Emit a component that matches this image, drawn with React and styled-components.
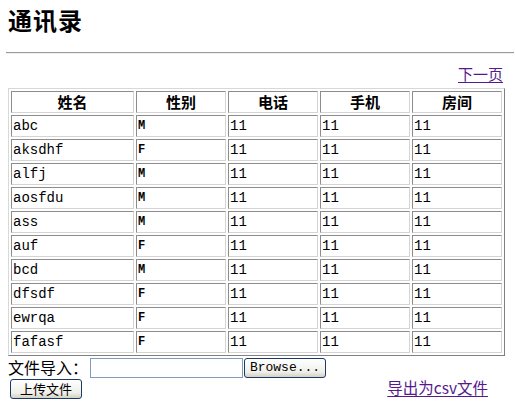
import React from 'react'
import styled, { createGlobalStyle } from 'styled-components'

const rows = [
  ['abc', 'M'],
  ['aksdhf', 'F'],
  ['alfj', 'M'],
  ['aosfdu', 'M'],
  ['ass', 'M'],
  ['auf', 'F'],
  ['bcd', 'M'],
  ['dfsdf', 'F'],
  ['ewrqa', 'F'],
  ['fafasf', 'F'],
]

const heads = ['姓名', '性别', '电话', '手机', '房间']

const App = () => {
  return (
    <Page>
      <Global />
      <Title>通讯录</Title>
      <Rule />
      <Pager>
        <NavLink href="#">下一页</NavLink>
      </Pager>
      <Table>
        <thead>
          <tr>
            {heads.map((h, i) => (
              <Head key={h} $first={i === 0}>{h}</Head>
            ))}
          </tr>
        </thead>
        <tbody>
          {rows.map(([name, sex]) => (
            <tr key={name}>
              <Cell>{name}</Cell>
              <Cell $sex>{sex}</Cell>
              <Cell>11</Cell>
              <Cell>11</Cell>
              <Cell>11</Cell>
            </tr>
          ))}
        </tbody>
      </Table>
      <ImportRow>
        <Label>文件导入：</Label>
        <FileField readOnly value="" />
        <Button $wide>Browse...</Button>
      </ImportRow>
      <ActionRow>
        <Button>上传文件</Button>
        <ExportLink href="#">导出为csv文件</ExportLink>
      </ActionRow>
    </Page>
  )
}

const Global = createGlobalStyle`
  body {
    margin: 0;
    background: #fff;
    font-family: "Noto Sans CJK SC", "Liberation Serif", serif;
  }
`

const Page = styled.div`
  width: 499px;
  padding: 8px;
  color: #000;
`

const Title = styled.h2`
  margin: 0;
  font-size: 24px;
  line-height: 24px;
  font-weight: 700;
  letter-spacing: 1px;
`

const Rule = styled.hr`
  margin: 20px -7px 0 -2px;
  height: 0;
  border: none;
  border-top: 1px solid #9a9a9a;
  border-bottom: 1px solid #eeeeee;
`

const Pager = styled.div`
  margin-top: 9px;
  height: 20px;
  line-height: 20px;
  text-align: right;
  padding-right: 4px;
`

const NavLink = styled.a`
  color: #551a8b;
  font-size: 15px;
  text-decoration: underline;
  text-underline-offset: 2px;
`

const ExportLink = styled(NavLink)`
  font-size: 15.5px;
  line-height: 16px;
`

const Table = styled.table`
  margin-top: 5px;
  width: 497px;
  border-collapse: separate;
  border-spacing: 2px;
  border: 1px solid;
  border-color: #d8d8d8 #808080 #808080 #d8d8d8;
`

const Head = styled.th`
  width: ${p => (p.$first ? '119px' : '86px')};
  height: 20px;
  padding: 0 1px;
  border: 1px solid;
  border-color: #8c8c8c #d4d4d4 #d4d4d4 #8c8c8c;
  font-size: 15px;
  line-height: 20px;
  font-weight: 700;
  text-align: center;
`

const Cell = styled.td`
  height: 20px;
  padding: 0 1px;
  border: 1px solid;
  border-color: #8c8c8c #d4d4d4 #d4d4d4 #8c8c8c;
  font-family: "Liberation Mono", monospace;
  font-size: ${p => (p.$sex ? '12px' : '14px')};
  font-weight: ${p => (p.$sex ? 700 : 400)};
  line-height: 20px;
  text-align: left;
  vertical-align: middle;
`

const ImportRow = styled.div`
  display: flex;
  align-items: center;
  height: 22px;
  gap: 1px;
`

const Label = styled.span`
  font-size: 16px;
  line-height: 20px;
`

const FileField = styled.input`
  box-sizing: border-box;
  width: 153px;
  height: 20px;
  margin: 2px 0 0 1px;
  border: 1px solid #7f9db9;
  padding: 0 2px;
  outline: none;
`

const Button = styled.button`
  box-sizing: border-box;
  width: ${p => (p.$wide ? '82px' : '72px')};
  height: 20px;
  margin-top: ${p => (p.$wide ? '2px' : '0')};
  padding: 0;
  border: 1px solid #1c3a66;
  border-radius: 3px;
  background: linear-gradient(#ffffff, #f0f0ea 70%, #d6d0c5);
  font-family: ${p => (p.$wide ? '"Liberation Mono", monospace' : '"Noto Sans CJK SC", sans-serif')};
  font-size: 13px;
  line-height: 18px;
  color: #000;
`

const ActionRow = styled.div`
  display: flex;
  justify-content: space-between;
  align-items: flex-start;
  height: 22px;
  padding: 1px 19px 0 2px;
`

export default App
